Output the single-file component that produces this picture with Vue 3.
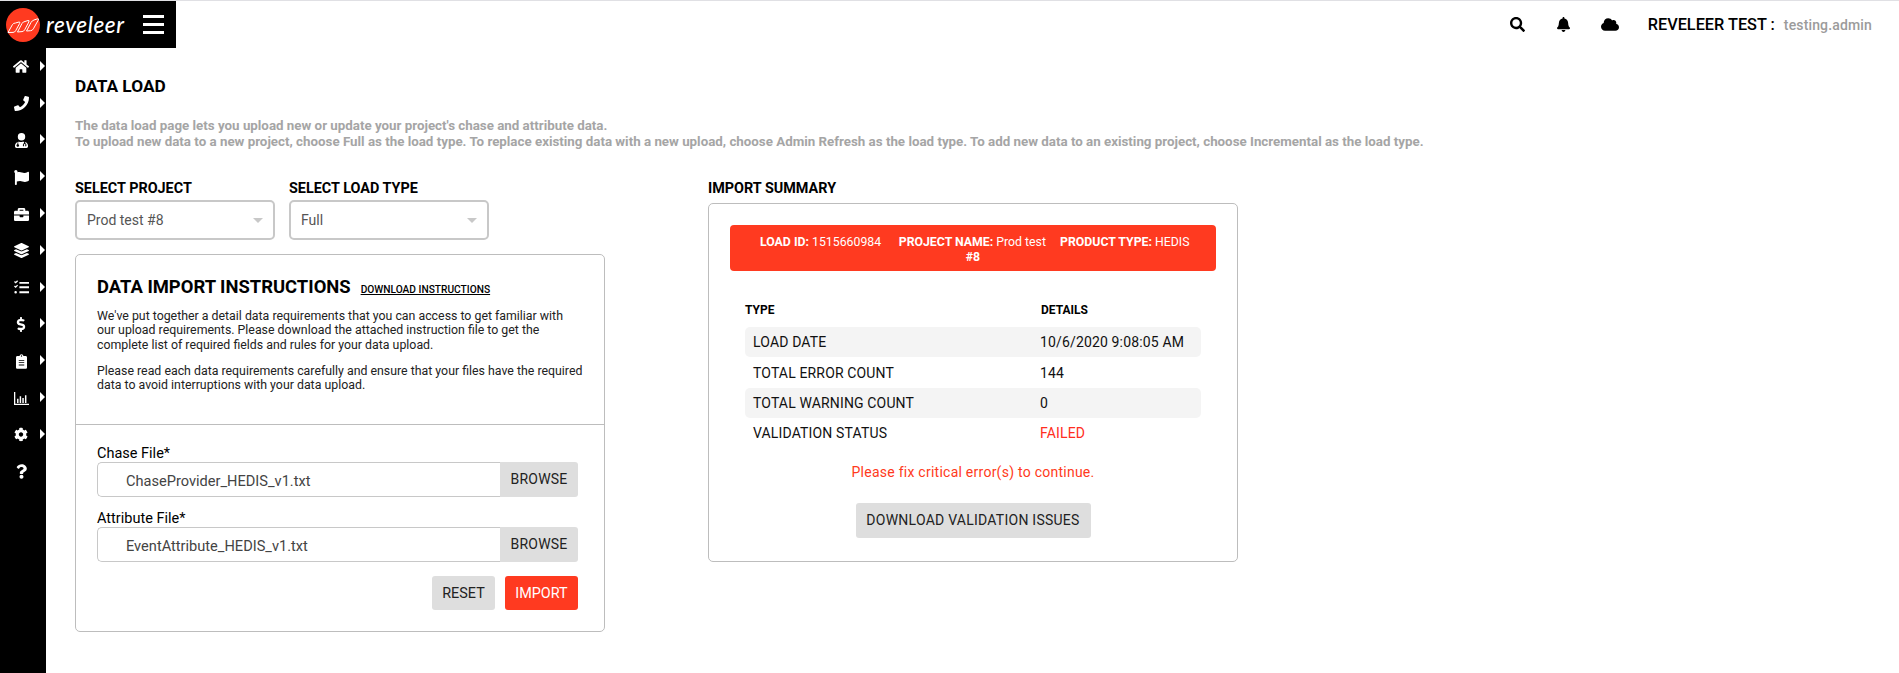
<script setup>
const navIcons = [
  { box: '0 0 576 512', w: 16, d: 'M280.37 148.26L96 300.11V464a16 16 0 0 0 16 16l112.06-.29a16 16 0 0 0 15.92-16V368a16 16 0 0 1 16-16h64a16 16 0 0 1 16 16v95.64a16 16 0 0 0 16 16.05L464 480a16 16 0 0 0 16-16V300L295.67 148.26a12.19 12.19 0 0 0-15.3 0zM571.6 251.47L488 182.56V44.05a12 12 0 0 0-12-12h-56a12 12 0 0 0-12 12v72.61L318.47 43a48 48 0 0 0-61 0L4.34 251.47a12 12 0 0 0-1.6 16.9l25.5 31A12 12 0 0 0 45.15 301l235.22-193.74a12.19 12.19 0 0 1 15.3 0L530.9 301a12 12 0 0 0 16.9-1.6l25.5-31a12 12 0 0 0-1.7-16.93z' },
  { box: '0 0 512 512', w: 15, d: 'M493.4 24.6l-104-24c-11.3-2.6-22.9 3.3-27.5 13.9l-48 112c-4.2 9.8-1.4 21.3 6.9 28l60.6 49.6c-36 76.7-98.9 140.5-177.2 177.2l-49.6-60.6c-6.8-8.3-18.2-11.1-28-6.9l-112 48C3.9 366.5-2 378.1.6 389.4l24 104C27.1 504.2 36.7 512 48 512c256.1 0 464-207.5 464-464 0-11.2-7.7-20.9-18.6-23.4z' },
  { box: '0 0 448 512', w: 13, d: 'M224 256a128 128 0 1 0 0-256 128 128 0 0 0 0 256zM96 304C40 320 0 372 0 432v32c0 26 22 48 48 48h352c26 0 48-22 48-48v-32c0-60-40-112-96-128v50a52 52 0 0 1 40 50v36c0 7-5 12-12 12h-28v-30h10v-18a30 30 0 0 0-60 0v18h10v30h-28c-7 0-12-5-12-12v-36a52 52 0 0 1 40-50v-54c-12-2-24-4-36-4h-20c-14 6-30 10-56 10s-42-4-56-10h-20c-4 0-8 0-12 1v87a44 44 0 1 1-32 0z' },
  { box: '0 0 512 512', w: 15, d: 'M349.565 98.783C295.978 98.783 251.721 64 184.348 64c-24.955 0-47.309 4.384-68.045 12.013a55.947 55.947 0 0 0 3.586-23.562C118.117 24.015 94.806 1.206 66.338.048 34.345-1.254 8 24.296 8 56c0 19.026 9.497 35.825 24 45.945V488c0 13.255 10.745 24 24 24h16c13.255 0 24-10.745 24-24v-94.4c28.311-12.064 63.582-22.122 114.435-22.122 53.588 0 97.844 34.783 165.217 34.783 48.169 0 86.667-16.294 122.505-40.858C506.84 359.452 512 349.571 512 339.045v-243.1c0-23.393-24.269-38.87-45.485-29.016-34.338 15.948-76.454 31.854-116.95 31.854z' },
  { box: '0 0 512 512', w: 15, d: 'M320 336c0 8.84-7.16 16-16 16h-96c-8.84 0-16-7.16-16-16v-48H0v144c0 25.6 22.4 48 48 48h416c25.6 0 48-22.4 48-48V288H320v48zm144-208h-80V80c0-25.6-22.4-48-48-48H176c-25.6 0-48 22.4-48 48v48H48c-25.6 0-48 22.4-48 48v80h512v-80c0-25.6-22.4-48-48-48zm-144 0H192V96h128v32z' },
  { box: '0 0 512 512', w: 15, d: 'M12.41 148.02l232.94 105.67c6.8 3.09 14.49 3.09 21.29 0l232.94-105.67c16.55-7.51 16.55-32.52 0-40.03L266.65 2.31a25.607 25.607 0 0 0-21.29 0L12.41 107.98c-16.55 7.51-16.55 32.53 0 40.04zm487.18 88.28l-58.09-26.33-161.64 73.27c-7.56 3.43-15.59 5.17-23.86 5.17s-16.29-1.74-23.86-5.17L70.51 209.97l-58.1 26.33c-16.55 7.5-16.55 32.5 0 40l232.94 105.59c6.8 3.08 14.49 3.08 21.29 0L499.59 276.3c16.55-7.5 16.55-32.5 0-40zm0 127.8l-57.87-26.23-161.86 73.37c-7.56 3.43-15.59 5.17-23.86 5.17s-16.29-1.74-23.86-5.17L70.29 337.87 12.41 364.1c-16.55 7.5-16.55 32.5 0 40l232.94 105.59c6.8 3.08 14.49 3.08 21.29 0L499.59 404.1c16.55-7.5 16.55-32.5 0-40z' },
  { box: '0 0 512 512', w: 15, d: 'M0 70l34-34 24 24 50-50 30 30-80 80zM0 220l34-34 24 24 50-50 30 30-80 80zM56 376a44 44 0 1 0 0 88 44 44 0 0 0 0-88zM184 64h328v64H184zM184 214h328v64H184zM184 384h328v64H184z' },
  { box: '0 0 288 512', w: 10, d: 'M209.2 233.4l-108-31.6C88.7 198.2 80 186.5 80 173.5c0-16.3 13.2-29.5 29.5-29.5h66.3c12.2 0 24.2 3.7 34.2 10.5 6.1 4.1 14.3 3.1 19.5-2l34.8-34c7.1-6.9 6.1-18.4-1.8-24.5C238 74.8 207.4 64.1 176 64V16c0-8.8-7.2-16-16-16h-32c-8.8 0-16 7.2-16 16v48h-2.5C45.8 64-5.4 118.7.5 183.6c4.2 46.1 39.4 83.6 83.8 96.6l102.5 30c12.5 3.7 21.2 15.3 21.2 28.3 0 16.3-13.2 29.5-29.5 29.5h-66.3C100 368 88 364.3 78 357.5c-6.1-4.1-14.3-3.1-19.5 2l-34.8 34c-7.1 6.9-6.1 18.4 1.8 24.5 24.5 19.2 55.1 29.9 86.5 30v48c0 8.8 7.2 16 16 16h32c8.8 0 16-7.2 16-16v-48.2c46.6-.9 90.3-28.6 105.7-72.7 21.5-61.6-14.6-124.8-72.5-141.7z' },
  { box: '0 0 384 512', w: 11, d: 'M336 64h-80c0-35.3-28.7-64-64-64s-64 28.7-64 64H48C21.5 64 0 85.5 0 112v352c0 26.5 21.5 48 48 48h288c26.5 0 48-21.5 48-48V112c0-26.5-21.5-48-48-48zM192 40a24 24 0 1 1 0 48 24 24 0 0 1 0-48zM96 200h192v32H96zm0 80h192v32H96zm0 80h192v32H96z', rule: 'evenodd' },
  { box: '0 0 512 448', w: 15, d: 'M0 0h44v404h468v44H0zM104 230h50v144h-50zM194 150h50v224h-50zM284 210h50v164h-50zM374 110h50v264h-50z' },
  { box: '0 0 512 512', w: 14, d: 'M487.4 315.7l-42.6-24.6c4.3-23.2 4.3-47 0-70.2l42.6-24.6c4.9-2.8 7.1-8.6 5.5-14-11.1-35.6-30-67.8-54.7-94.6-3.8-4.1-10-5.1-14.8-2.3L380.8 110c-17.9-15.4-38.5-27.3-60.8-35.1V25.8c0-5.6-3.9-10.5-9.4-11.7-36.7-8.2-74.3-7.8-109.2 0-5.5 1.2-9.4 6.1-9.4 11.7V75c-22.2 7.9-42.8 19.8-60.8 35.1L88.7 85.5c-4.9-2.8-11-1.9-14.8 2.3-24.7 26.7-43.6 58.9-54.7 94.6-1.7 5.4.6 11.2 5.5 14L67.3 221c-4.3 23.2-4.3 47 0 70.2l-42.6 24.6c-4.9 2.8-7.1 8.6-5.5 14 11.1 35.6 30 67.8 54.7 94.6 3.8 4.1 10 5.1 14.8 2.3l42.6-24.6c17.9 15.4 38.5 27.3 60.8 35.1v49.2c0 5.6 3.9 10.5 9.4 11.7 36.7 8.2 74.3 7.8 109.2 0 5.5-1.2 9.4-6.1 9.4-11.7v-49.2c22.2-7.9 42.8-19.8 60.8-35.1l42.6 24.6c4.9 2.8 11 1.9 14.8-2.3 24.7-26.7 43.6-58.9 54.7-94.6 1.5-5.5-.7-11.3-5.6-14.1zM256 336c-44.1 0-80-35.9-80-80s35.9-80 80-80 80 35.9 80 80-35.9 80-80 80z' },
  { box: '0 0 384 512', w: 11, d: 'M202.021 0C122.202 0 70.503 32.703 29.914 91.026c-7.363 10.58-5.093 25.086 5.178 32.874l43.138 32.709c10.373 7.865 25.132 6.026 33.253-4.148 25.049-31.381 43.63-49.449 82.757-49.449 30.764 0 68.816 19.799 68.816 49.631 0 22.552-18.617 34.134-48.993 51.164-35.423 19.86-82.299 44.576-82.299 106.405V320c0 13.255 10.745 24 24 24h72.471c13.255 0 24-10.745 24-24v-5.773c0-42.86 125.268-44.645 125.268-160.627C377.504 66.256 286.902 0 202.021 0zM192 373.459c-38.196 0-69.271 31.075-69.271 69.271 0 38.195 31.075 69.27 69.271 69.27s69.271-31.075 69.271-69.271-31.075-69.27-69.271-69.27z', noCaret: true }
]
const summaryRows = [
  { type: 'LOAD DATE', details: '10/6/2020 9:08:05 AM' },
  { type: 'TOTAL ERROR COUNT', details: '144' },
  { type: 'TOTAL WARNING COUNT', details: '0' },
  { type: 'VALIDATION STATUS', details: 'FAILED', failed: true }
]
</script>

<template>
  <div class="shell">
    <header class="topbar">
      <div class="brand">
        <svg class="logo" viewBox="0 0 34 34">
          <circle cx="17" cy="17" r="17" fill="#ff3a20" />
          <g fill="none" stroke="#fff" stroke-width="1" stroke-linejoin="round">
            <path d="M2 24.5 L6.5 16.5 Q7.5 15 9.5 15 L13 14 Q14.5 13.8 13.6 15.5 L9.6 22.8 Q8.7 24.4 7 24.4 Z" />
            <path d="M11.5 24 L16 15.5 Q17 13.6 19 13.5 L22 12.5 Q23.7 12.2 22.8 14 L18.7 21.8 Q17.8 23.5 16 23.6 Z" />
            <path d="M20.5 23 L25 14.5 Q26 12.6 28 12 L31.5 10.8 Q33 10.5 32.2 12.2 L27.4 20.8 Q26.4 22.6 24.6 22.7 Z" />
          </g>
        </svg>
        <span class="wordmark">reveleer</span>
        <span class="burger"><i></i><i></i><i></i></span>
      </div>
      <div class="top-right">
        <svg class="ti" viewBox="0 0 512 512" width="15" height="15"><path d="M505 442.7L405.3 343c-4.5-4.5-10.6-7-17-7H372c27.6-35.3 44-79.7 44-128C416 93.1 322.9 0 208 0S0 93.1 0 208s93.1 208 208 208c48.3 0 92.7-16.4 128-44v16.3c0 6.4 2.5 12.5 7 17l99.7 99.7c9.4 9.4 24.6 9.4 33.9 0l28.3-28.3c9.4-9.4 9.4-24.6.1-34zM208 336c-70.7 0-128-57.2-128-128 0-70.7 57.2-128 128-128 70.7 0 128 57.2 128 128 0 70.7-57.2 128-128 128z"/></svg>
        <svg class="ti bell" viewBox="0 0 448 512" width="13" height="15"><path d="M224 512c35.32 0 63.97-28.65 63.97-64H160.03c0 35.35 28.65 64 63.97 64zm215.39-149.71c-19.32-20.76-55.47-51.99-55.47-154.29 0-77.7-54.48-139.9-127.94-155.16V32c0-17.67-14.32-32-31.98-32s-31.98 14.33-31.98 32v20.84C118.56 68.1 64.08 130.3 64.08 208c0 102.3-36.15 133.53-55.47 154.29-6 6.45-8.66 14.16-8.61 21.71.11 16.4 12.98 32 32.1 32h383.8c19.12 0 32-15.6 32.1-32 .05-7.55-2.61-15.27-8.61-21.71z"/></svg>
        <svg class="ti cloud" viewBox="0 0 640 512" width="18" height="15"><path d="M537.6 226.6c4.1-10.7 6.4-22.4 6.4-34.6 0-53-43-96-96-96-19.7 0-38.1 6-53.3 16.2C367 64.2 315.3 32 256 32c-88.4 0-160 71.6-160 160 0 2.7.1 5.4.2 8.1C40.2 219.8 0 273.2 0 336c0 79.5 64.5 144 144 144h368c70.7 0 128-57.3 128-128 0-61.9-44-113.6-102.4-125.4z"/></svg>
        <span class="org">REVELEER TEST :</span>
        <span class="user">testing.admin</span>
      </div>
    </header>

    <div class="body">
      <nav class="sidebar">
        <div v-for="(icon, i) in navIcons" :key="i" class="nav-item">
          <span class="nav-icon">
            <svg :viewBox="icon.box" :width="icon.w" height="15"><path :d="icon.d" :fill-rule="icon.rule || 'nonzero'" fill="#fff" /></svg>
          </span>
          <span v-if="!icon.noCaret" class="caret"></span>
        </div>
      </nav>

      <main class="content">
        <h1 class="title">DATA LOAD</h1>
        <p class="intro">The data load page lets you upload new or update your project's chase and attribute data.<br />To upload new data to a new project, choose Full as the load type. To replace existing data with a new upload, choose Admin Refresh as the load type. To add new data to an existing project, choose Incremental as the load type.</p>

        <div class="columns">
          <section class="left">
            <div class="selects">
              <div class="field">
                <label class="field-label">SELECT PROJECT</label>
                <div class="select"><span>Prod test #8</span><i class="arrow"></i></div>
              </div>
              <div class="field">
                <label class="field-label">SELECT LOAD TYPE</label>
                <div class="select"><span>Full</span><i class="arrow"></i></div>
              </div>
            </div>

            <div class="card instructions">
              <div class="ins-top">
                <div class="ins-head">
                  <h2>DATA IMPORT INSTRUCTIONS</h2>
                  <a class="dl-link">DOWNLOAD INSTRUCTIONS</a>
                </div>
                <p>We've put together a detail data requirements that you can access to get familiar with our upload requirements. Please download the attached instruction file to get the complete list of required fields and rules for your data upload.</p>
                <p class="p2">Please read each data requirements carefully and ensure that your files have the required data to avoid interruptions with your data upload.</p>
              </div>
              <div class="ins-bottom">
                <label class="file-label">Chase File*</label>
                <div class="file-row">
                  <div class="file-input">ChaseProvider_HEDIS_v1.txt</div>
                  <button class="btn browse">BROWSE</button>
                </div>
                <label class="file-label second">Attribute File*</label>
                <div class="file-row">
                  <div class="file-input">EventAttribute_HEDIS_v1.txt</div>
                  <button class="btn browse">BROWSE</button>
                </div>
                <div class="actions">
                  <button class="btn reset">RESET</button>
                  <button class="btn import">IMPORT</button>
                </div>
              </div>
            </div>
          </section>

          <section class="right">
            <div class="field-label">IMPORT SUMMARY</div>
            <div class="card summary">
              <div class="banner">
                <span class="b-item first"><b>LOAD ID:</b> 1515660984</span> <span class="b-item mid"><b>PROJECT NAME:</b> Prod test</span> <span class="b-item"><b>PRODUCT TYPE:</b> HEDIS</span><br /><b>#8</b>
              </div>
              <div class="thead"><span>TYPE</span><span>DETAILS</span></div>
              <div v-for="row in summaryRows" :key="row.type" class="row">
                <span>{{ row.type }}</span>
                <span :class="{ failed: row.failed }">{{ row.details }}</span>
              </div>
              <p class="fix">Please fix critical error(s) to continue.</p>
              <div class="dl-wrap"><button class="btn dl">DOWNLOAD VALIDATION ISSUES</button></div>
            </div>
          </section>
        </div>
      </main>
    </div>
  </div>
</template>

<style>
html, body { margin: 0; background: #fff; overflow: hidden; }
</style>

<style scoped>
* { box-sizing: border-box; }
.shell { width: 1899px; height: 673px; display: flex; flex-direction: column; font-family: Roboto, sans-serif; color: #000; border-top: 1px solid #e0e0e4; }
.topbar { height: 47px; display: flex; justify-content: space-between; align-items: center; flex: none; }
.brand { width: 176px; height: 47px; background: #000; display: flex; align-items: center; padding-left: 6px; }
.logo { width: 34px; height: 34px; flex: none; }
.wordmark { color: #fff; font-family: Lato, sans-serif; font-style: italic; font-weight: 500; font-size: 22.5px; margin-left: 6px; letter-spacing: 0.6px; width: 77px; white-space: nowrap; }
.burger { margin-left: 20px; display: flex; flex-direction: column; gap: 5px; }
.burger i { display: block; width: 21px; height: 3px; background: #fff; }
.top-right { display: flex; align-items: center; padding-right: 27px; }
.ti { display: block; }
.bell { margin-left: 32px; }
.cloud { margin-left: 31px; }
.org { font-size: 16.3px; font-weight: 500; margin-left: 29px; }
.user { font-size: 14px; color: #9b9b9b; font-weight: 500; margin-left: 9px; letter-spacing: 0.15px; }
.body { flex: 1; display: flex; min-height: 0; }
.sidebar { width: 46px; background: #000; flex: none; display: flex; flex-direction: column; padding-top: 0.5px; }
.nav-item { height: 36.8px; display: flex; align-items: center; position: relative; }
.nav-icon { width: 42px; display: flex; justify-content: center; }
.nav-icon svg { display: block; }
.caret { position: absolute; left: 39.5px; top: 50%; margin-top: -6px; border-left: 5px solid #fff; border-top: 5px solid transparent; border-bottom: 5px solid transparent; }
.content { flex: 1; padding: 29px 0 0 29px; }
.title { font-size: 17.3px; font-weight: 700; margin: 0; line-height: 19px; }
.intro { font-size: 13.33px; font-weight: 700; color: #a5a5a5; line-height: 16px; margin: 22px 0 0; }
.columns { display: flex; margin-top: 31px; }
.left { width: 530px; }
.right { width: 530px; margin-left: 103px; }
.selects { display: flex; gap: 14px; }
.field-label { display: block; font-size: 14.4px; font-weight: 700; line-height: 16px; }
.select { margin-top: 3px; width: 200px; height: 40px; border: 2px solid #c8c8c8; border-radius: 5px; display: flex; align-items: center; justify-content: space-between; padding: 0 10px; font-size: 14px; color: #555; }
.arrow { border-top: 5px solid #c8c8c8; border-left: 5px solid transparent; border-right: 5px solid transparent; }
.card { border: 1px solid #bdbdbd; border-radius: 5px; }
.instructions { margin-top: 14px; height: 378px; display: flex; flex-direction: column; }
.ins-top { height: 170px; padding: 20px 0 0 21px; border-bottom: 1px solid #bdbdbd; font-size: 12.35px; line-height: 14.5px; color: #222; }
.ins-head { display: flex; align-items: baseline; }
.ins-head h2 { font-size: 18.4px; font-weight: 700; line-height: 24px; margin: 0; color: #000; }
.dl-link { font-size: 10.2px; font-weight: 500; text-decoration: underline; margin-left: 10px; color: #000; }
.ins-top p { margin: 9.5px 0 0; width: 487px; }
.ins-top p.p2 { margin-top: 11.5px; width: 500px; }
.ins-bottom { padding: 21px 26px 0 21px; }
.file-label { display: block; font-size: 14.5px; font-weight: 400; line-height: 16px; color: #000; }
.file-label.second { margin-top: 14px; }
.file-row { display: flex; }
.file-input { flex: 1; height: 35px; border: 1px solid #c8c8c8; border-right: 0; border-radius: 5px 0 0 5px; padding: 2px 0 0 28px; display: flex; align-items: center; font-size: 14.6px; color: #444; }
.btn { border: 0; background: #dedede; font-family: Roboto, sans-serif; font-size: 14px; color: #222; border-radius: 3px; padding: 0; }
.browse { width: 78px; height: 35px; border-radius: 0 3px 3px 0; letter-spacing: 0.2px; padding-bottom: 2px; }
.actions { display: flex; justify-content: flex-end; gap: 10px; margin-top: 14px; }
.reset { width: 63px; height: 34px; font-size: 14.4px; }
.import { width: 73px; height: 34px; background: #ff3a20; color: #fff; font-size: 14.4px; }
.summary { margin-top: 6px; height: 359px; padding: 21px 21px 0; }
.banner { height: 46px; background: #ff3a20; border-radius: 4px; color: #fff; text-align: center; font-size: 12.3px; line-height: 15px; padding: 10px 10px 0; }
.banner b { font-weight: 700; }
.b-item { margin: 0 5.5px; }
.b-item.first { margin-left: 9px; }
.b-item.mid { margin-left: 9px; }
.thead { display: flex; margin: 31px 0 0 15px; font-size: 12px; font-weight: 700; line-height: 16px; height: 25px; }
.thead span:first-child { width: 296px; }
.row { display: flex; align-items: center; margin-left: 15px; width: 456px; height: 30.4px; padding-left: 8px; font-size: 14px; letter-spacing: 0.15px; color: #111; border-radius: 5px; }
.row span:first-child { width: 287px; }
.thead + .row, .thead + .row + .row + .row { background: #f4f4f4; }
.failed { color: #ff2d20; }
.fix { margin: 15px 0 0; text-align: center; font-size: 14px; color: #ff3a20; letter-spacing: 0.25px; line-height: 16px; }
.dl-wrap { display: flex; justify-content: center; margin-top: 23px; }
.dl { width: 235px; height: 35px; letter-spacing: 0.25px; }
</style>
